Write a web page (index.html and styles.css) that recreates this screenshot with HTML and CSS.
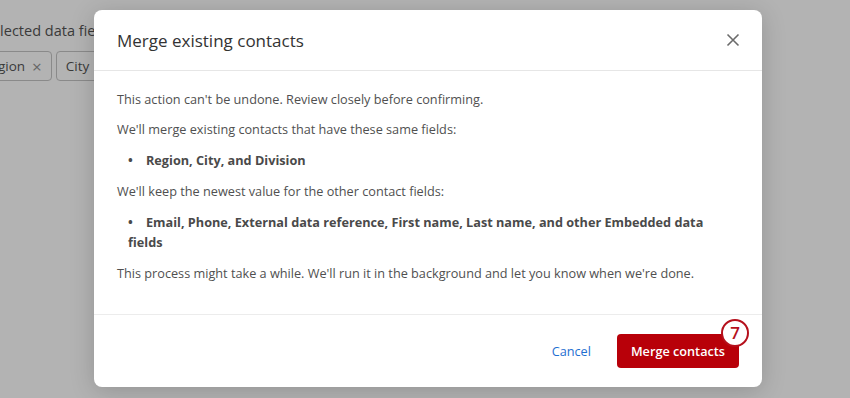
FILE: index.html
```html
<!DOCTYPE html>
<html>
<head>
    <meta charset="UTF-8">
    <title>Merge existing contacts</title>
    <link rel="stylesheet" href="styles.css">
</head>
<body>
    <div class="page">
        <p class="page-label">Selected data fields</p>
        <div class="tags">
            <span class="tag">Region <span class="tag-x">&times;</span></span>
            <span class="tag">City <span class="tag-x">&times;</span></span>
        </div>
    </div>

    <div class="overlay">
        <div class="modal">
            <div class="modal-header">
                <h2>Merge existing contacts</h2>
                <button class="close" aria-label="Close">
                    <svg width="14" height="14" viewBox="0 0 14 14"><path d="M1.5 1.5 L12.5 12.5 M12.5 1.5 L1.5 12.5" stroke="#6b6b6b" stroke-width="1.6" fill="none"/></svg>
                </button>
            </div>
            <div class="modal-body">
                <p>This action can't be undone. Review closely before confirming.</p>
                <p>We'll merge existing contacts that have these same fields:</p>
                <ul>
                    <li>Region, City, and Division</li>
                </ul>
                <p>We'll keep the newest value for the other contact fields:</p>
                <ul>
                    <li>Email, Phone, External data reference, First name, Last name, and other Embedded data fields</li>
                </ul>
                <p>This process might take a while. We'll run it in the background and let you know when we're done.</p>
            </div>
            <div class="modal-footer">
                <button class="cancel">Cancel</button>
                <button class="confirm">Merge contacts<span class="step">7</span></button>
            </div>
        </div>
    </div>
</body>
</html>
```

FILE: styles.css
```css
body {
    margin: 0;
    font-family: "Open Sans", "Noto Sans", sans-serif;
    background-color: #b3b3b3;
    width: 850px;
    height: 398px;
    overflow: hidden;
    position: relative;
}

.page {
    margin-left: -16px;
    padding-top: 21px;
    color: #3a3a3a;
}

.page-label {
    margin: 0 0 11px 0;
    font-size: 14.5px;
}

.tags {
    display: flex;
    gap: 4px;
    margin-left: -12px;
}

.tag {
    display: inline-flex;
    align-items: center;
    gap: 7px;
    height: 28px;
    padding: 0 9px;
    border: 1px solid #8a8a8a;
    border-radius: 4px;
    font-size: 13.5px;
}

.tag-x {
    font-size: 17px;
    color: #666;
}

.overlay {
    position: absolute;
    top: 0;
    left: 0;
    right: 0;
    bottom: 0;
    padding: 10px 88px 0 94px;
}

.modal {
    background-color: white;
    border-radius: 8px;
    box-shadow: 0 4px 24px rgba(0,0,0,0.18);
    height: 377px;
    display: flex;
    flex-direction: column;
}

.modal-header {
    display: flex;
    align-items: center;
    justify-content: space-between;
    height: 60px;
    padding: 0 22px 0 23px;
    border-bottom: 1px solid #e6e6e6;
}

.modal-header h2 {
    margin: 0;
    font-size: 17px;
    font-weight: normal;
    color: #333;
}

.close {
    border: none;
    background: none;
    padding: 0;
    width: 14px;
    height: 14px;
    cursor: pointer;
}

.modal-body {
    flex: 1;
    padding: 19px 23px 0 23px;
    font-size: 12.7px;
    color: #505050;
    border-bottom: 1px solid #ececec;
}

.modal-body p {
    margin: 0 0 12px 0;
    line-height: 18px;
}

.modal-body ul {
    margin: 0 0 12px 0;
    padding-left: 11px;
    list-style-position: inside;
}

.modal-body li {
    font-weight: bold;
    color: #4a4a4a;
    line-height: 20px;
}

.modal-body li::marker {
    content: "\2022\00a0\00a0\00a0\00a0";
}

.modal-footer {
    display: flex;
    justify-content: flex-end;
    align-items: center;
    gap: 6px;
    height: 72px;
    padding: 0 23px;
}

.cancel {
    border: none;
    background: none;
    color: #1f6fd1;
    font-family: inherit;
    font-size: 12.7px;
    padding: 8px 20px;
    cursor: pointer;
}

.confirm {
    position: relative;
    height: 34px;
    padding: 0 14px;
    border: none;
    border-radius: 4px;
    background-color: #b80009;
    color: white;
    font-family: inherit;
    font-size: 12.7px;
    font-weight: 600;
    cursor: pointer;
}

.step {
    position: absolute;
    top: -15px;
    right: -10px;
    width: 24px;
    height: 24px;
    border: 2px solid #b5101c;
    border-radius: 50%;
    background-color: white;
    color: #b5101c;
    font-size: 17px;
    font-weight: 600;
    line-height: 24px;
    text-align: center;
}
```
